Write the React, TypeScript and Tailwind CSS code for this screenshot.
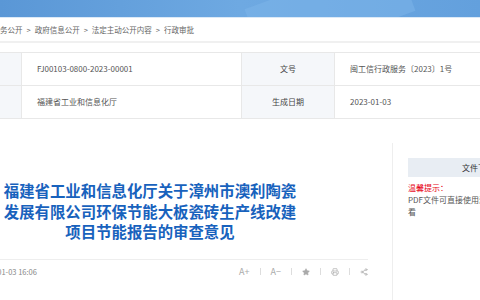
import { Star, Printer, Share2 } from "lucide-react";

export default function App() {
  return (
    <div className="relative h-[300px] w-[480px] overflow-hidden bg-white font-['Noto_Sans_CJK_SC','Liberation_Sans',sans-serif]">
      {/* Banner */}
      <div className="relative h-[17px] overflow-hidden bg-linear-to-r from-[#5a97d6] via-[#6ea9e2] to-[#63a0dd]">
        <div className="absolute left-[250px] top-[-20px] h-[60px] w-[160px] rotate-[-20deg] bg-[#7db5ea]/50" />
      </div>
      <div className="h-px bg-[#dbe9f7]" />

      {/* Breadcrumb */}
      <div className="flex h-[25px] items-center gap-[4px] border-b-2 border-[#f0f0f0] text-[7.5px] text-[#666]">
        <span>务公开</span>
        <span>&gt;</span>
        <span>政府信息公开</span>
        <span>&gt;</span>
        <span>法定主动公开内容</span>
        <span>&gt;</span>
        <span>行政审批</span>
      </div>

      {/* Info table */}
      <div className="mt-[9px] grid grid-cols-[22px_220px_93px_1fr] border-t border-[#e8e8e8] text-[8px]">
        <div className="h-[33px] border-b border-r border-[#e8e8e8] bg-[#f5f7fa]" />
        <div className="flex h-[33px] items-center border-b border-r border-[#e8e8e8] pl-[15px] text-[#555]">
          FJ00103-0800-2023-00001
        </div>
        <div className="flex h-[33px] items-center justify-center border-b border-r border-[#e8e8e8] bg-[#f5f7fa] text-[#444]">
          文号
        </div>
        <div className="flex h-[33px] items-center whitespace-nowrap border-b border-[#e8e8e8] pl-[15px] text-[#555]">
          闽工信行政服务〔2023〕1号
        </div>

        <div className="h-[33px] border-b border-r border-[#e8e8e8] bg-[#f5f7fa]" />
        <div className="flex h-[33px] items-center border-b border-r border-[#e8e8e8] pl-[15px] text-[#555]">
          福建省工业和信息化厅
        </div>
        <div className="flex h-[33px] items-center justify-center border-b border-r border-[#e8e8e8] bg-[#f5f7fa] text-[#444]">
          生成日期
        </div>
        <div className="flex h-[33px] items-center border-b border-[#e8e8e8] pl-[15px] text-[#555]">
          2023-01-03
        </div>
      </div>

      {/* Content + sidebar */}
      <div className="mt-[24px] flex">
        <div className="w-[368px] shrink-0 pt-[37px]">
          <h1 className="w-[300px] text-center text-[15.4px] font-bold leading-[20.5px] text-[#1862bd]">
            福建省工业和信息化厅关于漳州市澳利陶瓷发展有限公司环保节能大板瓷砖生产线改建项目节能报告的审查意见
          </h1>
          <div className="mt-[17px] border-b border-[#eeeeee]" />
          <div className="flex h-[24px] items-center justify-between">
            <span className="ml-[-22px] text-[7.5px] text-[#888]">2023-01-03 16:06</span>
            <div className="flex items-center gap-[10px] text-[9px] text-[#aaa]">
              <span>A+</span>
              <span className="h-[7px] w-px bg-[#ddd]" />
              <span>A−</span>
              <span className="h-[7px] w-px bg-[#ddd]" />
              <Star className="h-[8px] w-[8px] fill-[#aaa]" strokeWidth={1.5} />
              <span className="h-[7px] w-px bg-[#ddd]" />
              <Printer className="h-[8px] w-[8px]" strokeWidth={2} />
              <span className="h-[7px] w-px bg-[#ddd]" />
              <Share2 className="h-[8px] w-[8px]" strokeWidth={2} />
            </div>
          </div>
        </div>

        <div className="ml-[24px] h-[160px] w-[170px] shrink-0 border-l border-[#eeeeee] pl-[15px] pt-[15px]">
          <div className="flex h-[19px] w-[140px] items-center justify-center bg-[#e8edf3] text-[8px] text-[#333]">
            文件下载
          </div>
          <div className="mt-[5px] text-[8px] leading-[12px]">
            <p className="text-[#e60012]">温馨提示：</p>
            <p className="text-[#555]">
              PDF文件可直接使用浏览器打开查
              <br />
              看
            </p>
          </div>
        </div>
      </div>
    </div>
  );
}
